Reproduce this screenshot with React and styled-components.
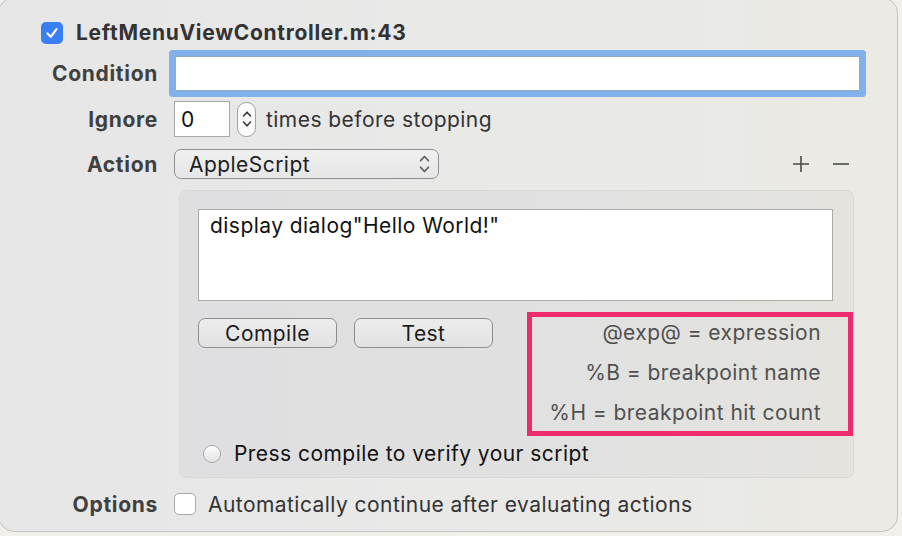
import React from 'react';
import styled, { createGlobalStyle } from 'styled-components';

const Global = createGlobalStyle`
  html, body {
    margin: 0;
    padding: 0;
    background: #f1f0eb;
    overflow: hidden;
  }
  body {
    font-family: Inter, "Liberation Sans", sans-serif;
    font-size: 21px;
    letter-spacing: 0.45px;
  }
`;

const Panel = styled.div`
  box-sizing: border-box;
  width: 900px;
  height: 535px;
  margin: -3px 0 0 -2px;
  padding: 3px 0 0 2px;
  border: 1px solid #c4c3bf;
  border-radius: 16px;
  background: linear-gradient(90deg, #e6e6e6 0%, #e9e9e8 55%, #ebeae4 100%);
  display: flex;
  flex-direction: column;
`;

const Header = styled.div`
  display: flex;
  align-items: center;
  gap: 13px;
  margin-top: 20px;
  padding-left: 40px;
  height: 23px;
`;

const Title = styled.div`
  font-weight: 700;
  color: #333;
  letter-spacing: 0.7px;
`;

const Row = styled.div`
  display: flex;
  align-items: center;
  margin-top: ${p => p.$top}px;
  height: ${p => p.$h}px;
`;

const Label = styled.div`
  width: 157px;
  flex: none;
  text-align: right;
  font-weight: 700;
  color: #404040;
  letter-spacing: 0.7px;
  margin-right: 16px;
`;

const Checkbox = styled.div`
  box-sizing: border-box;
  width: 22px;
  height: 22px;
  flex: none;
  border-radius: 5px;
  display: flex;
  align-items: center;
  justify-content: center;
  background: ${p => (p.$checked ? '#3a7ef3' : '#fff')};
  border: ${p => (p.$checked ? 'none' : '1px solid #a9a9a9')};
`;

const TextField = styled.div`
  box-sizing: border-box;
  background: #fff;
  border: 1px solid #a8a8a8;
  width: ${p => p.$w}px;
  height: ${p => p.$h}px;
  margin-left: ${p => p.$ml || 0}px;
  color: #111;
  display: flex;
  align-items: center;
  padding-left: 6px;
`;

const Focused = styled(TextField)`
  border: 1px solid #8ea9cc;
  box-shadow: 0 0 0 6px #80b1eb;
  border-radius: 1px;
`;

const Stepper = styled.div`
  box-sizing: border-box;
  width: 19px;
  height: 35px;
  margin-left: 7px;
  border: 1px solid #a2a2a2;
  border-radius: 9px;
  background: #fbfbfb;
  display: flex;
  align-items: center;
  justify-content: center;
`;

const Plain = styled.div`
  color: ${p => p.$color || '#333'};
  margin-left: ${p => p.$ml || 0}px;
  white-space: nowrap;
`;

const Popup = styled.div`
  box-sizing: border-box;
  width: 265px;
  height: 30px;
  border: 1px solid #8f8f8f;
  border-radius: 7px;
  background: linear-gradient(#f0f0f0, #e6e6e6);
  display: flex;
  align-items: center;
  justify-content: space-between;
  padding: 0 8px 0 14px;
  color: #1d1d1d;
`;

const PlusMinus = styled.div`
  margin-left: auto;
  margin-right: 47px;
  display: flex;
  gap: 22px;
  align-items: center;
`;

const ActionBox = styled.div`
  box-sizing: border-box;
  width: 675px;
  height: 288px;
  margin: 11px 0 0 178px;
  padding: 18px 20px 0 18px;
  border-radius: 7px;
  background: linear-gradient(90deg, #dfdfe1 0%, #e1e1e1 60%, #e4e3de 100%);
  border: 1px solid #d8d8d6;
  display: flex;
  flex-direction: column;
`;

const ScriptArea = styled.div`
  box-sizing: border-box;
  height: 92px;
  background: #fff;
  border: 1px solid #a9a9a9;
  padding: 3px 11px;
  color: #111;
`;

const ButtonRow = styled.div`
  display: flex;
  align-items: flex-start;
  margin-top: 11px;
  gap: 17px;
`;

const Button = styled.div`
  box-sizing: border-box;
  width: 139px;
  height: 30px;
  margin-top: 6px;
  border: 1.5px solid #8d8d8d;
  border-radius: 7px;
  background: linear-gradient(#ececec, #e2e2e2);
  display: flex;
  align-items: center;
  justify-content: center;
  color: #1b1b1b;
`;

const Callout = styled.div`
  box-sizing: border-box;
  width: 326px;
  height: 124px;
  margin-left: auto;
  margin-right: -20px;
  border: 5px solid #ee2b6c;
  padding-right: 27px;
  text-align: right;
  color: #505050;
`;

const CalloutLine = styled.div`
  line-height: 40px;
  &:first-child {
    margin-top: -4px;
  }
`;

const RadioRow = styled.div`
  display: flex;
  align-items: center;
  margin: 5px 0 0 5px;
  gap: 13px;
`;

const Radio = styled.div`
  box-sizing: border-box;
  width: 18px;
  height: 18px;
  border-radius: 50%;
  border: 1px solid #aaa;
  background: linear-gradient(#fdfdfd, #e3e3e3);
`;

const Check = () => (
  <svg width="14" height="14" viewBox="0 0 14 14">
    <path d="M2.5 7.5 L5.8 10.8 L11.5 3.2" fill="none" stroke="#fff" strokeWidth="2.2" strokeLinecap="round" strokeLinejoin="round" />
  </svg>
);

const UpDown = ({ w = 10, h = 20, color = '#3a3a3a' }) => (
  <svg width={w} height={h} viewBox="0 0 10 20">
    <path d="M1.5 7 L5 3.2 L8.5 7 M1.5 13 L5 16.8 L8.5 13" fill="none" stroke={color} strokeWidth="1.6" strokeLinecap="round" strokeLinejoin="round" />
  </svg>
);

const PlusIcon = () => (
  <svg width="18" height="18" viewBox="0 0 18 18">
    <path d="M9 1 V17 M1 9 H17" stroke="#4a4a4a" strokeWidth="1.6" />
  </svg>
);

const MinusIcon = () => (
  <svg width="18" height="18" viewBox="0 0 18 18">
    <path d="M1 9 H17" stroke="#4a4a4a" strokeWidth="1.6" />
  </svg>
);

const hints = ['@exp@ = expression', '%B = breakpoint name', '%H = breakpoint hit count'];

export default function App() {
  return (
    <Panel>
      <Global />
      <Header>
        <Checkbox $checked>
          <Check />
        </Checkbox>
        <Title>LeftMenuViewController.m:43</Title>
      </Header>

      <Row $top={12} $h={35}>
        <Label>Condition</Label>
        <Focused $w={685} $h={35} $ml={1} />
      </Row>

      <Row $top={10} $h={36}>
        <Label>Ignore</Label>
        <TextField $w={56} $h={36}>0</TextField>
        <Stepper>
          <UpDown />
        </Stepper>
        <Plain $ml={10}>times before stopping</Plain>
      </Row>

      <Row $top={12} $h={30}>
        <Label>Action</Label>
        <Popup>
          AppleScript
          <UpDown w={11} h={22} color="#666" />
        </Popup>
        <PlusMinus>
          <PlusIcon />
          <MinusIcon />
        </PlusMinus>
      </Row>

      <ActionBox>
        <ScriptArea>display dialog"Hello World!"</ScriptArea>
        <ButtonRow>
          <Button>Compile</Button>
          <Button>Test</Button>
          <Callout>
            {hints.map(h => (
              <CalloutLine key={h}>{h}</CalloutLine>
            ))}
          </Callout>
        </ButtonRow>
        <RadioRow>
          <Radio />
          <Plain $color="#111">Press compile to verify your script</Plain>
        </RadioRow>
      </ActionBox>

      <Row $top={15} $h={22}>
        <Label>Options</Label>
        <Checkbox />
        <Plain $ml={12}>Automatically continue after evaluating actions</Plain>
      </Row>
    </Panel>
  );
}
